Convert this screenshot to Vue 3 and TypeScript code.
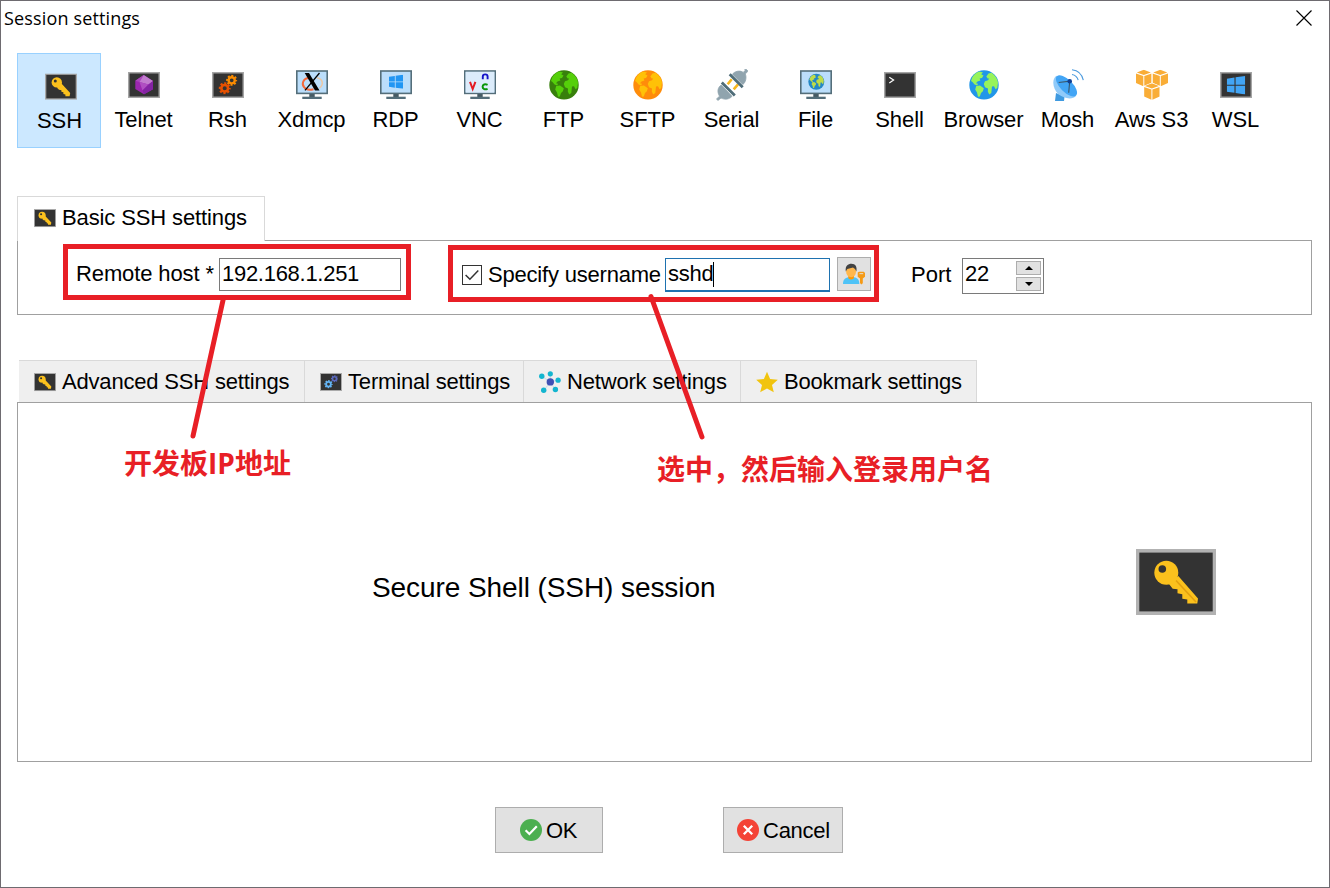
<script setup lang="ts">
import { ref } from 'vue'

interface SessionType { name: string; icon: string }
interface SettingsTab { label: string; icon: string; width: number }

const sessions: SessionType[] = [
  { name: 'SSH', icon: 'ssh' },
  { name: 'Telnet', icon: 'telnet' },
  { name: 'Rsh', icon: 'rsh' },
  { name: 'Xdmcp', icon: 'xdmcp' },
  { name: 'RDP', icon: 'rdp' },
  { name: 'VNC', icon: 'vnc' },
  { name: 'FTP', icon: 'ftp' },
  { name: 'SFTP', icon: 'sftp' },
  { name: 'Serial', icon: 'serial' },
  { name: 'File', icon: 'file' },
  { name: 'Shell', icon: 'shell' },
  { name: 'Browser', icon: 'browser' },
  { name: 'Mosh', icon: 'mosh' },
  { name: 'Aws S3', icon: 'aws' },
  { name: 'WSL', icon: 'wsl' },
]
const selected = ref('SSH')

const tabs: SettingsTab[] = [
  { label: 'Advanced SSH settings', icon: 'tab-key', width: 286 },
  { label: 'Terminal settings', icon: 'tab-gears', width: 219 },
  { label: 'Network settings', icon: 'tab-network', width: 217 },
  { label: 'Bookmark settings', icon: 'tab-star', width: 236 },
]

const host = ref('192.168.1.251')
const username = ref('sshd')
const port = ref('22')
</script>

<template>
  <div class="window">
    <svg class="defs" width="0" height="0" aria-hidden="true">
      <defs>
        <symbol id="key" viewBox="0 0 80 66">
          <rect width="80" height="66" fill="#b2b2b2" />
          <rect x="3.3" y="3.6" width="73.4" height="58.8" fill="#333" />
          <path d="M42.3 27 62 49.5 61.3 54.5H51.3V50.5L46.3 49.7V45.3L41.5 44.3V40.3L36.7 39.7 33 35Z" fill="#fbc11d" />
          <path d="M40 31.5 60 53" stroke="#e3a010" stroke-width="1.6" />
          <circle cx="30.3" cy="23.7" r="12" fill="#fbc11d" />
          <circle cx="26.3" cy="20" r="3.8" fill="#333" />
        </symbol>
        <symbol id="key-small" viewBox="0 0 80 66">
          <rect width="80" height="66" fill="#a8a8a8" />
          <rect x="3.3" y="3.6" width="73.4" height="58.8" fill="#333" />
          <path d="M40 24 63 49 61.5 57H51V52.5L46 51.5V47L41 46V42L35 41 30 36Z" fill="#fbc11d" />
          <circle cx="29.5" cy="22.5" r="13" fill="#fbc11d" />
          <circle cx="25.8" cy="18.8" r="3.8" fill="#333" />
        </symbol>
        <symbol id="ssh" viewBox="0 0 32 32"><use href="#key-small" y="3.4" width="32" height="26.4" /></symbol>
        <symbol id="screen" viewBox="0 0 32 32">
          <rect x="0.75" y="3.75" width="30.5" height="24.5" fill="#333" stroke="#a5a5a5" stroke-width="1.5" />
        </symbol>
        <symbol id="monitor" viewBox="0 0 32 32">
          <path d="M13.3 24h5.4v4h-5.4z" fill="#455a64" />
          <path d="M6.3 27.7h19.4V30H6.3z" fill="#546e7a" />
          <rect x="0.8" y="2" width="30.4" height="22.4" fill="#bbdefb" stroke="#546e7a" stroke-width="1.6" />
        </symbol>
        <symbol id="winlogo" viewBox="0 0 18 18">
          <path d="M0 2.6 7.5 1.5V8.5H0ZM8.6 1.3 18 0V8.5H8.6ZM0 9.5H7.5V16.5L0 15.4ZM8.6 9.5H18V18L8.6 16.7Z" />
        </symbol>
        <symbol id="land" viewBox="0 0 30 30">
          <path d="M3.2 7.5C5.2 4.4 7.5 2.4 10.5 1.6L14 2.6 12.2 4.3 14.5 5.5 13 8 10.6 8.4 11.4 10.4 8.5 11.4 7 13.2 9 13.8 8.2 15.4 5.6 14.4 3.5 12 2 11Z" />
          <path d="M7.2 16 11 15.6 14.8 18.3 13.9 21.2 12 23 10.8 26.5 9 26.8 8 22.5 6.2 19.5Z" />
          <path d="M17.3 6.5 19.5 3.5 22.5 2.8C26 5 28.4 8.5 29 12.5L28.3 18 26.6 19.3 25 16.3 23 16.5 22.3 23 20.2 24.6 18.8 21.5 19 18.5 16 17.2 14.8 14 16 11.2 19 10.2 20.2 8.6 18.7 8.4Z" />
        </symbol>
        <symbol id="gear" viewBox="-6 -6 12 12">
          <circle r="3.2" fill="none" stroke="currentColor" stroke-width="2.5" />
          <circle r="4.7" fill="none" stroke="currentColor" stroke-width="2.1" stroke-dasharray="2 1.691" stroke-dashoffset="1" />
        </symbol>
        <symbol id="telnet" viewBox="0 0 32 32">
          <use href="#screen" />
          <path d="M15.7 6 25 12V20.3L16 25.3 7.3 20V11.7Z" fill="#9c27b0" />
          <path d="M15.7 6 11.5 13 7.3 11.7Z" fill="#ab47bc" />
          <path d="M15.7 6 11.5 13 20.5 15.5 25 12Z" fill="#c27ccf" />
          <path d="M11.5 13 20.5 15.5 14.5 21.5Z" fill="#b04fc2" />
          <path d="M25 12 20.5 15.5 14.5 21.5 16 25.3 25 20.3Z" fill="#8424a4" />
        </symbol>
        <symbol id="rsh" viewBox="0 0 32 32">
          <use href="#screen" />
          <use href="#gear" x="13.9" y="5.5" width="11.6" height="11.6" color="#fb8c00" />
          <use href="#gear" x="6.4" y="13" width="12.6" height="12.6" color="#e65100" />
        </symbol>
        <symbol id="xdmcp" viewBox="0 0 32 32">
          <use href="#monitor" />
          <path d="M12 9C7 10 5.5 15 8 18 10 20.8 14 21.3 17.5 20.2" fill="none" stroke="#f4693c" stroke-width="2" />
          <path d="M21 8.8C27 10 28 15.5 23.500 19" fill="none" stroke="#edc7a3" stroke-width="1.5" />
          <path d="M8.7 4H13L23.5 21.5H19Z" fill="#000" />
          <path d="M23.5 4 9 21.3" stroke="#000" stroke-width="1.3" />
        </symbol>
        <symbol id="rdp" viewBox="0 0 32 32">
          <use href="#monitor" /><use href="#winlogo" x="9" y="5.8" width="14" height="14" fill="#2196f3" />
        </symbol>
        <symbol id="vnc" viewBox="0 0 32 32">
          <use href="#monitor" />
          <rect x="1.6" y="2.8" width="28.8" height="20.8" fill="#dcecfb" />
          <g fill="none" stroke-width="2">
            <path d="M6 12.8 8.7 20 11.4 12.8" stroke="#e31b23" />
            <path d="M18.8 10.3V7.400C18.8 4.700 23.6 4.700 23.6 7.400V10.3" stroke="#1414c8" stroke-width="1.9" />
            <path d="M23.6 15.9C21 14.7 18.6 15.5 18.6 17.8S21 20.9 23.6 19.8" stroke="#0a960a" />
          </g>
        </symbol>
        <symbol id="ftp" viewBox="0 0 32 32">
          <circle cx="16" cy="15.9" r="14.7" fill="#38800c" /><use href="#land" x="1" y="1" width="30" height="30" fill="#55cf0a" />
        </symbol>
        <symbol id="sftp" viewBox="0 0 32 32">
          <circle cx="16" cy="15.9" r="14.7" fill="#ff8c0a" /><use href="#land" x="1" y="1" width="30" height="30" fill="#ffc107" />
        </symbol>
        <symbol id="browser" viewBox="0 0 32 32">
          <circle cx="16" cy="15.9" r="14.7" fill="#2196e8" /><use href="#land" x="1" y="1" width="30" height="30" fill="#97f35b" />
        </symbol>
        <symbol id="serial" viewBox="0 0 32 32">
          <path d="M16.5 5.2C18.5 2.5 23.5.8 27.2 3.4L29.2 1.3 28.7.6 30 .2 31.8 1.8 30.8 3.6 29.2 4.7C31 8.5 29.500 13.7 26.8 15.5Z" fill="#90a4ae" stroke="#90a4ae" stroke-width=".8" />
          <path d="M5.3 16C1.5 18.5 1 23 3.5 27.2L.5 30 2 31.400 5 29C9 31 13.5 30.3 16 27.3Z" fill="#90a4ae" stroke="#90a4ae" stroke-width=".8" />
          <path d="M15.7 10.3 11.7 15.3M22 15.3 17.7 20.3" stroke="#f9b81d" stroke-width="2.6" />
          <path d="M13.7 5.2 26.7 18.2M5.8 13.6 18.8 26.6" stroke="#4f6d79" stroke-width="2.8" />
        </symbol>
        <symbol id="file" viewBox="0 0 32 32">
          <use href="#monitor" /><circle cx="16.3" cy="12.8" r="8" fill="#2488c6" /><use href="#land" x="8.3" y="4.8" width="16" height="16" fill="#bfdc48" />
        </symbol>
        <symbol id="shell" viewBox="0 0 32 32">
          <use href="#screen" /><path d="M5.3 8.3 9.6 11.1 5.3 14" fill="none" stroke="#fff" stroke-width="1.2" />
        </symbol>
        <symbol id="mosh" viewBox="0 0 32 32">
          <path d="M4 24 12.5 27.5 12 32H3Z" fill="#3f9ae0" />
          <path d="M4.5 6.8C-.5 10 .5 20 6.5 25.3 12.5 30.3 21 30.6 24 27Z" fill="#90caf9" />
          <ellipse cx="14.5" cy="16.8" rx="13.6" ry="6.2" transform="rotate(45 14.5 16.8)" fill="#42a5f5" />
          <path d="M6.7 13.5 17.7 12.2 16.7 23.7" fill="none" stroke="#3c5668" stroke-width="1.1" />
          <circle cx="17.7" cy="12.2" r="2.3" fill="#0d3f94" />
          <path d="M20 5.5Q24.8 6.2 26.2 11.2M20 .7Q29.2 1.6 31.3 11.2" fill="none" stroke="#4a9ade" stroke-width="1.1" />
        </symbol>
        <symbol id="cube" viewBox="0 0 16 17">
          <path d="M8 0 15.2 2.8 8 5.4.8 2.8ZM0 3.8 7.5 6.4V16.8L0 13.5ZM8.5 6.4 16 3.8V13.5L8.5 16.8Z" />
        </symbol>
        <symbol id="aws" viewBox="0 0 32 32">
          <g fill="#f9ad37">
            <use href="#cube" x="0" y=".8" width="15.6" height="16.6" />
            <use href="#cube" x="16.5" y=".8" width="15.6" height="16.6" />
            <path d="M15.900 13.500 24.400 17V28L16 32 7.400 28V17Z" fill="#fff" />
            <use href="#cube" x="8.1" y="14.3" width="15.6" height="16.6" />
          </g>
        </symbol>
        <symbol id="wsl" viewBox="0 0 32 32">
          <use href="#screen" /><use href="#winlogo" x="6.8" y="6.8" width="18.4" height="18.8" fill="#42a5f5" />
        </symbol>
        <symbol id="tab-key" viewBox="0 0 22 22"><use href="#key-small" y="2" width="22" height="18.2" /></symbol>
        <symbol id="tab-gears" viewBox="0 0 22 22">
          <rect x=".5" y="2.5" width="21" height="17" fill="#333" stroke="#aaa" />
          <use href="#gear" x="4.1" y="8.800" width="8.8" height="8.8" color="#64b5f6" />
          <use href="#gear" x="10.800" y="4" width="7.4" height="7.4" color="#5c6bc0" />
        </symbol>
        <symbol id="tab-network" viewBox="0 0 22 22">
          <path d="M11.3 11 2.7 5.2M11.3 11V2.8M11.3 11 19 9.2M11.3 11 16.3 18.5M11.3 11 4.7 19.5" stroke="#c9dce8" />
          <circle cx="11.3" cy="10.9" r="3.7" fill="#3f51b5" />
          <g fill="#13b5cf"><circle cx="2.8" cy="5.2" r="2.7" /><circle cx="11.3" cy="2.8" r="2.6" /><circle cx="19.1" cy="9.2" r="2.6" /><circle cx="16.4" cy="18.5" r="2.7" /><circle cx="4.7" cy="19.3" r="2.7" /></g>
        </symbol>
        <symbol id="tab-star" viewBox="0 0 22 22">
          <path d="M11 .8 14.1 8 21.8 8.7 16 13.9 17.8 21.3 11 17.4 4.2 21.3 6 13.9.2 8.7 7.9 8Z" fill="#f1c40f" />
        </symbol>
      </defs>
    </svg>

    <header class="titlebar">
      <span class="title">Session settings</span>
      <svg class="close" width="16" height="16" viewBox="0 0 16 16"><path d="M.5.5 15.5 15.5M15.5.5.5 15.5" stroke="#000" stroke-width="1.15" /></svg>
    </header>

    <nav class="toolbar">
      <div v-for="s in sessions" :key="s.name" class="session" :class="{ active: s.name === selected }" @click="selected = s.name">
        <svg width="32" height="32"><use :href="'#' + s.icon" /></svg>
        <span>{{ s.name }}</span>
      </div>
    </nav>

    <section class="basic">
      <div class="basic-tab">
        <svg width="22" height="22"><use href="#tab-key" /></svg>
        <span>Basic SSH settings</span>
      </div>
      <div class="basic-panel">
        <div class="marked host-group">
          <label>Remote host *</label>
          <div class="field host">{{ host }}</div>
        </div>
        <div class="marked user-group">
          <svg class="check" width="20" height="20" viewBox="0 0 20 20"><rect x=".5" y=".5" width="19" height="19" fill="#fff" stroke="#333" /><path d="M3.6 10 7.9 14.3 16.3 5.6" fill="none" stroke="#333" stroke-width="1.5" /></svg>
          <label>Specify username</label>
          <div class="field user">{{ username }}<i class="caret"></i></div>
          <button class="user-btn">
            <svg width="24" height="22" viewBox="0 0 24 22">
              <path d="M1 21C1 16.5 3 14.8 6.5 14.2H12C15.5 14.8 17.3 16.5 17.3 21Z" fill="#4fc3f7" />
              <path d="M6.3 12H11.9V15.2Q9 17.8 6.3 15.2Z" fill="#ff9800" />
              <ellipse cx="9.1" cy="8.2" rx="5" ry="6" fill="#ffb74d" />
              <path d="M3.8 8.5C3 2.5 6 .7 9.5.7 13.5.7 15.3 3.5 14.4 8.5L13 6 11 4.5 5.3 6Z" fill="#424242" />
              <path d="M15.7 9.5 17 8.7H21.8L23 10V13.8L20.8 15.5V20.2L19.3 21.5 18 20V15.5L15.7 13.8Z" fill="#f59a16" />
              <path d="M17.5 10.6H21.2" stroke="#e8d5b5" stroke-width="1.2" />
            </svg>
          </button>
        </div>
        <label class="port-label">Port</label>
        <div class="port">
          <span>{{ port }}</span>
          <div class="spin">
            <button><svg width="8" height="4"><path d="M0 4 4 0 8 4Z" /></svg></button>
            <button><svg width="8" height="4"><path d="M0 0 4 4 8 0Z" /></svg></button>
          </div>
        </div>
      </div>
    </section>

    <section class="advanced">
      <div class="tabs">
        <div v-for="t in tabs" :key="t.label" class="tab" :style="{ width: t.width + 'px' }">
          <svg width="22" height="22"><use :href="'#' + t.icon" /></svg>
          <span>{{ t.label }}</span>
        </div>
      </div>
      <div class="session-panel">
        <span class="headline">Secure Shell (SSH) session</span>
        <svg width="80" height="66"><use href="#key" /></svg>
      </div>
    </section>

    <footer class="actions">
      <button class="ok">
        <svg width="22" height="22"><circle cx="11" cy="11" r="11" fill="#4caf50" /><path d="M5.6 11.3 9.4 15 16.8 7.2" fill="none" stroke="#fff" stroke-width="2.2" /></svg>
        <span>OK</span>
      </button>
      <button class="cancel">
        <svg width="22" height="22"><circle cx="11" cy="11" r="11" fill="#f44336" /><path d="M6.8 6.8 15.2 15.2M15.2 6.8 6.8 15.2" stroke="#fff" stroke-width="2.3" /></svg>
        <span>Cancel</span>
      </button>
    </footer>

    <svg class="pointers" width="1330" height="888">
      <path d="M223.5 298 193 436M651 296.5 702 437" stroke="#e81f26" stroke-width="5" stroke-linecap="round" />
    </svg>
    <div class="note note-ip">开发板<span class="latin">IP</span>地址</div>
    <div class="note note-user">选中，然后输入登录用户名</div>
  </div>
</template>

<style>
body { margin: 0; background: #fff; }
</style>

<style scoped>
* { box-sizing: border-box; }
.window {
  position: relative; width: 1330px; height: 888px; overflow: hidden;
  border: 1px solid #6e6b70; background: #fff; color: #000;
  font: 22px/26px "Liberation Sans", Arial, sans-serif; white-space: nowrap;
}
svg { display: block; flex: none; }
.defs { position: absolute; }
button { padding: 0; margin: 0; font: inherit; color: #000; border: 1px solid #adadad; background: #e1e1e1; border-radius: 0; }
.titlebar { height: 52px; display: flex; justify-content: space-between; padding: 4px 17px 0 3px; }
.title { font: 18px/26px "Open Sans", "Noto Sans", sans-serif; letter-spacing: 0.15px; }
.close { margin-top: 5px; }
.toolbar { display: flex; padding-left: 16px; height: 95px; }
.session { width: 84px; height: 95px; display: flex; flex-direction: column; align-items: center; padding-top: 16px; }
.session svg { margin-left: 2px; }
.session span { margin-top: 6px; padding-left: 1px; letter-spacing: -0.1px; }
.session.active { background: #cce8ff; border: 1px solid #99d1ff; }
.session.active svg { margin-left: 3px; }
.basic { margin: 48px 17px 0 16px; }
.basic-tab {
  position: relative; z-index: 1; width: 248px; height: 45px; margin-bottom: -1px; padding: 0 0 3px 16px;
  display: flex; align-items: center; gap: 6px; background: #fff; border: 1px solid #d9d9d9; border-bottom: 0;
  letter-spacing: -0.12px;
}
.basic-tab svg { margin-top: 1px; }
.basic-panel { height: 75px; border: 1px solid #a0a0a0; display: flex; align-items: flex-start; padding: 3px 0 0 45px; }
.marked { border: 5px solid #e81f26; display: flex; }
.host-group { width: 348px; height: 56px; padding: 9px 0 0 8px; }
.host-group label { width: 143px; margin-top: 3px; letter-spacing: -0.12px; }
.field { border: 1px solid #7a7a7a; background: #fff; }
.host { width: 182px; height: 33px; padding: 2px 0 0 2px; letter-spacing: -0.28px; }
.user-group { width: 431px; height: 57px; margin: 1px 0 0 37px; padding: 7px 0 0 9px; }
.check { margin-top: 8px; }
.user-group label { margin: 5px 0 0 6px; width: 177px; letter-spacing: -0.2px; }
.user { width: 165px; height: 34px; margin-top: 1px; padding: 2px 0 0 2px; display: flex; border: 1px solid #1e72b0; border-bottom-width: 2px; letter-spacing: -0.25px; }
.caret { width: 1px; height: 25px; background: #000; margin-top: 1px; }
.user-btn { width: 34px; height: 34px; margin-left: 7px; padding-left: 4px; }
.port-label { margin: 18px 0 0 32px; width: 51px; }
.port { width: 82px; height: 36px; margin-top: 14px; border: 1px solid #7a7a7a; display: flex; justify-content: space-between; padding: 2px 2px 0 2px; letter-spacing: -0.2px; }
.spin { display: flex; flex-direction: column; gap: 2px; }
.spin button { width: 25px; height: 14px; display: flex; align-items: center; justify-content: center; }
.advanced { margin: 45px 17px 0 16px; }
.tabs { display: flex; height: 42px; padding-left: 2px; }
.tab { display: flex; align-items: center; gap: 6px; padding: 1px 0 0 15px; background: #efefef; border-top: 1px solid #d9d9d9; border-right: 1px solid #d9d9d9; letter-spacing: -0.18px; }
.session-panel { height: 360px; border: 1px solid #a0a0a0; display: flex; justify-content: space-between; align-items: center; padding: 0 95px 0 354px; }
.headline { font-size: 28px; line-height: 32px; margin-top: 12px; letter-spacing: -0.08px; }
.actions { margin: 45px 0 0 494px; display: flex; gap: 120px; }
.actions button { height: 46px; display: flex; align-items: center; gap: 4px; }
.actions span { margin-top: 2px; letter-spacing: -0.25px; }
.ok { width: 108px; padding-left: 24px; }
.cancel { width: 120px; padding-left: 13px; }
.pointers { position: absolute; left: -1px; top: -1px; z-index: 3; }
.note { position: absolute; z-index: 3; color: #e81f26; font: bold 28px/36px "Noto Sans CJK SC", sans-serif; }
.latin { font-family: "Open Sans", "Noto Sans", sans-serif; line-height: 1; }
.note-ip { left: 123px; top: 443px; }
.note-user { left: 656px; top: 449px; }
</style>
